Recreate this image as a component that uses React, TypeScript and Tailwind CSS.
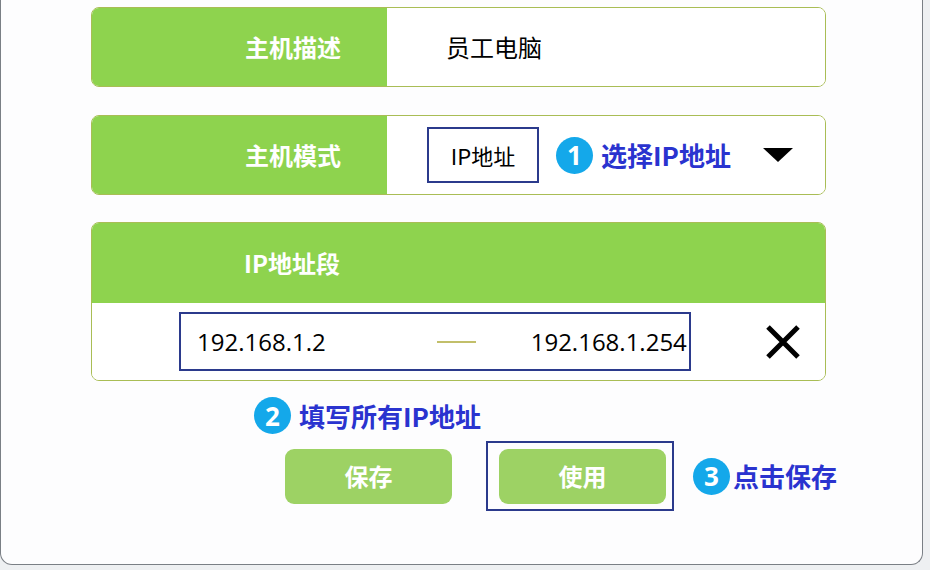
const cjk = "font-['Noto_Sans_CJK_SC',sans-serif]";
const num = "font-['Open_Sans','Noto_Sans_CJK_SC',sans-serif]";

const Badge = ({ n }: { n: string }) => (
  <div className="w-[37px] h-[37px] rounded-full bg-[#14a8ea] flex items-center justify-center shrink-0">
    <span className={`text-white text-[26px] font-bold leading-none ${num}`}>{n}</span>
  </div>
);

const Note = ({ n, text, gap = "gap-[8px]" }: { n: string; text: string; gap?: string }) => (
  <div className={`flex items-center ${gap}`}>
    <Badge n={n} />
    <span className={`text-[#2a33cf] text-[26px] font-bold leading-none ${cjk}`}>{text}</span>
  </div>
);

const Label = ({ text }: { text: string }) => (
  <div className="w-[295px] bg-[#8ed34e] flex items-center pl-[153px] shrink-0">
    <span className={`text-white text-[24px] font-bold ${cjk}`}>{text}</span>
  </div>
);

export default function App() {
  return (
    <div className="w-[930px] h-[570px] bg-[#eef0f2] overflow-hidden">
      <div className="w-[923px] h-[565px] bg-[#fdfdfe] border-l border-r border-b border-[#7a7f85] rounded-b-[12px] pl-[90px] pt-[7px]">
        {/* 主机描述 */}
        <div className="w-[735px] h-[80px] flex border border-[#a9bd55] rounded-[8px] overflow-hidden">
          <Label text="主机描述" />
          <div className="flex-1 bg-white flex items-center pl-[59px]">
            <span className={`text-[24px] text-black ${cjk}`}>员工电脑</span>
          </div>
        </div>

        {/* 主机模式 */}
        <div className="w-[735px] h-[80px] mt-[28px] flex border border-[#a9bd55] rounded-[8px] overflow-hidden">
          <Label text="主机模式" />
          <div className="flex-1 bg-white flex items-center pl-[40px]">
            <div className="w-[112px] h-[56px] border-2 border-[#2b3a8c] flex items-center justify-center">
              <span className={`text-[22px] text-black ${cjk}`}>IP地址</span>
            </div>
            <div className="ml-[17px]">
              <Note n="1" text="选择IP地址" />
            </div>
            <svg className="ml-[32px]" width="30" height="14" viewBox="0 0 30 14">
              <polygon points="0,0 30,0 15,14" fill="#000" />
            </svg>
          </div>
        </div>

        {/* IP地址段 */}
        <div className="w-[735px] h-[159px] mt-[27px] flex flex-col border border-[#a9bd55] rounded-[8px] overflow-hidden">
          <div className="h-[80px] bg-[#8ed34e] flex items-center pl-[152px] shrink-0">
            <span className={`text-white text-[24px] font-bold ${cjk}`}>IP地址段</span>
          </div>
          <div className="flex-1 bg-white flex items-center pl-[87px]">
            <div className="w-[512px] h-[59px] border-2 border-[#2b3a8c] flex items-center pl-[16px]">
              <span className={`text-[24px] text-black ${num}`}>192.168.1.2</span>
              <div className="ml-[111px] w-[39px] h-[2px] bg-[#c2bf6a]" />
              <span className={`ml-[55px] text-[24px] text-black whitespace-nowrap ${num}`}>192.168.1.254</span>
            </div>
            <svg className="ml-[74px]" width="36" height="36" viewBox="0 0 36 36">
              <path d="M3 3 L33 33 M33 3 L3 33" stroke="#000" strokeWidth="5" />
            </svg>
          </div>
        </div>

        {/* 填写 */}
        <div className="ml-[163px] mt-[16px]">
          <Note n="2" text="填写所有IP地址" />
        </div>

        {/* buttons */}
        <div className="flex items-center mt-[7px] ml-[194px]">
          <button className="w-[167px] h-[55px] rounded-[9px] bg-[#9dd264] flex items-center justify-center">
            <span className={`text-white text-[24px] font-bold ${cjk}`}>保存</span>
          </button>
          <div className="ml-[34px] w-[188px] h-[70px] border-2 border-[#2b3a8c] flex items-center pl-[11px]">
            <button className="w-[167px] h-[55px] rounded-[9px] bg-[#9dd264] flex items-center justify-center">
              <span className={`text-white text-[24px] font-bold ${cjk}`}>使用</span>
            </button>
          </div>
          <div className="ml-[19px]">
            <Note n="3" text="点击保存" gap="gap-[3px]" />
          </div>
        </div>
      </div>
    </div>
  );
}
